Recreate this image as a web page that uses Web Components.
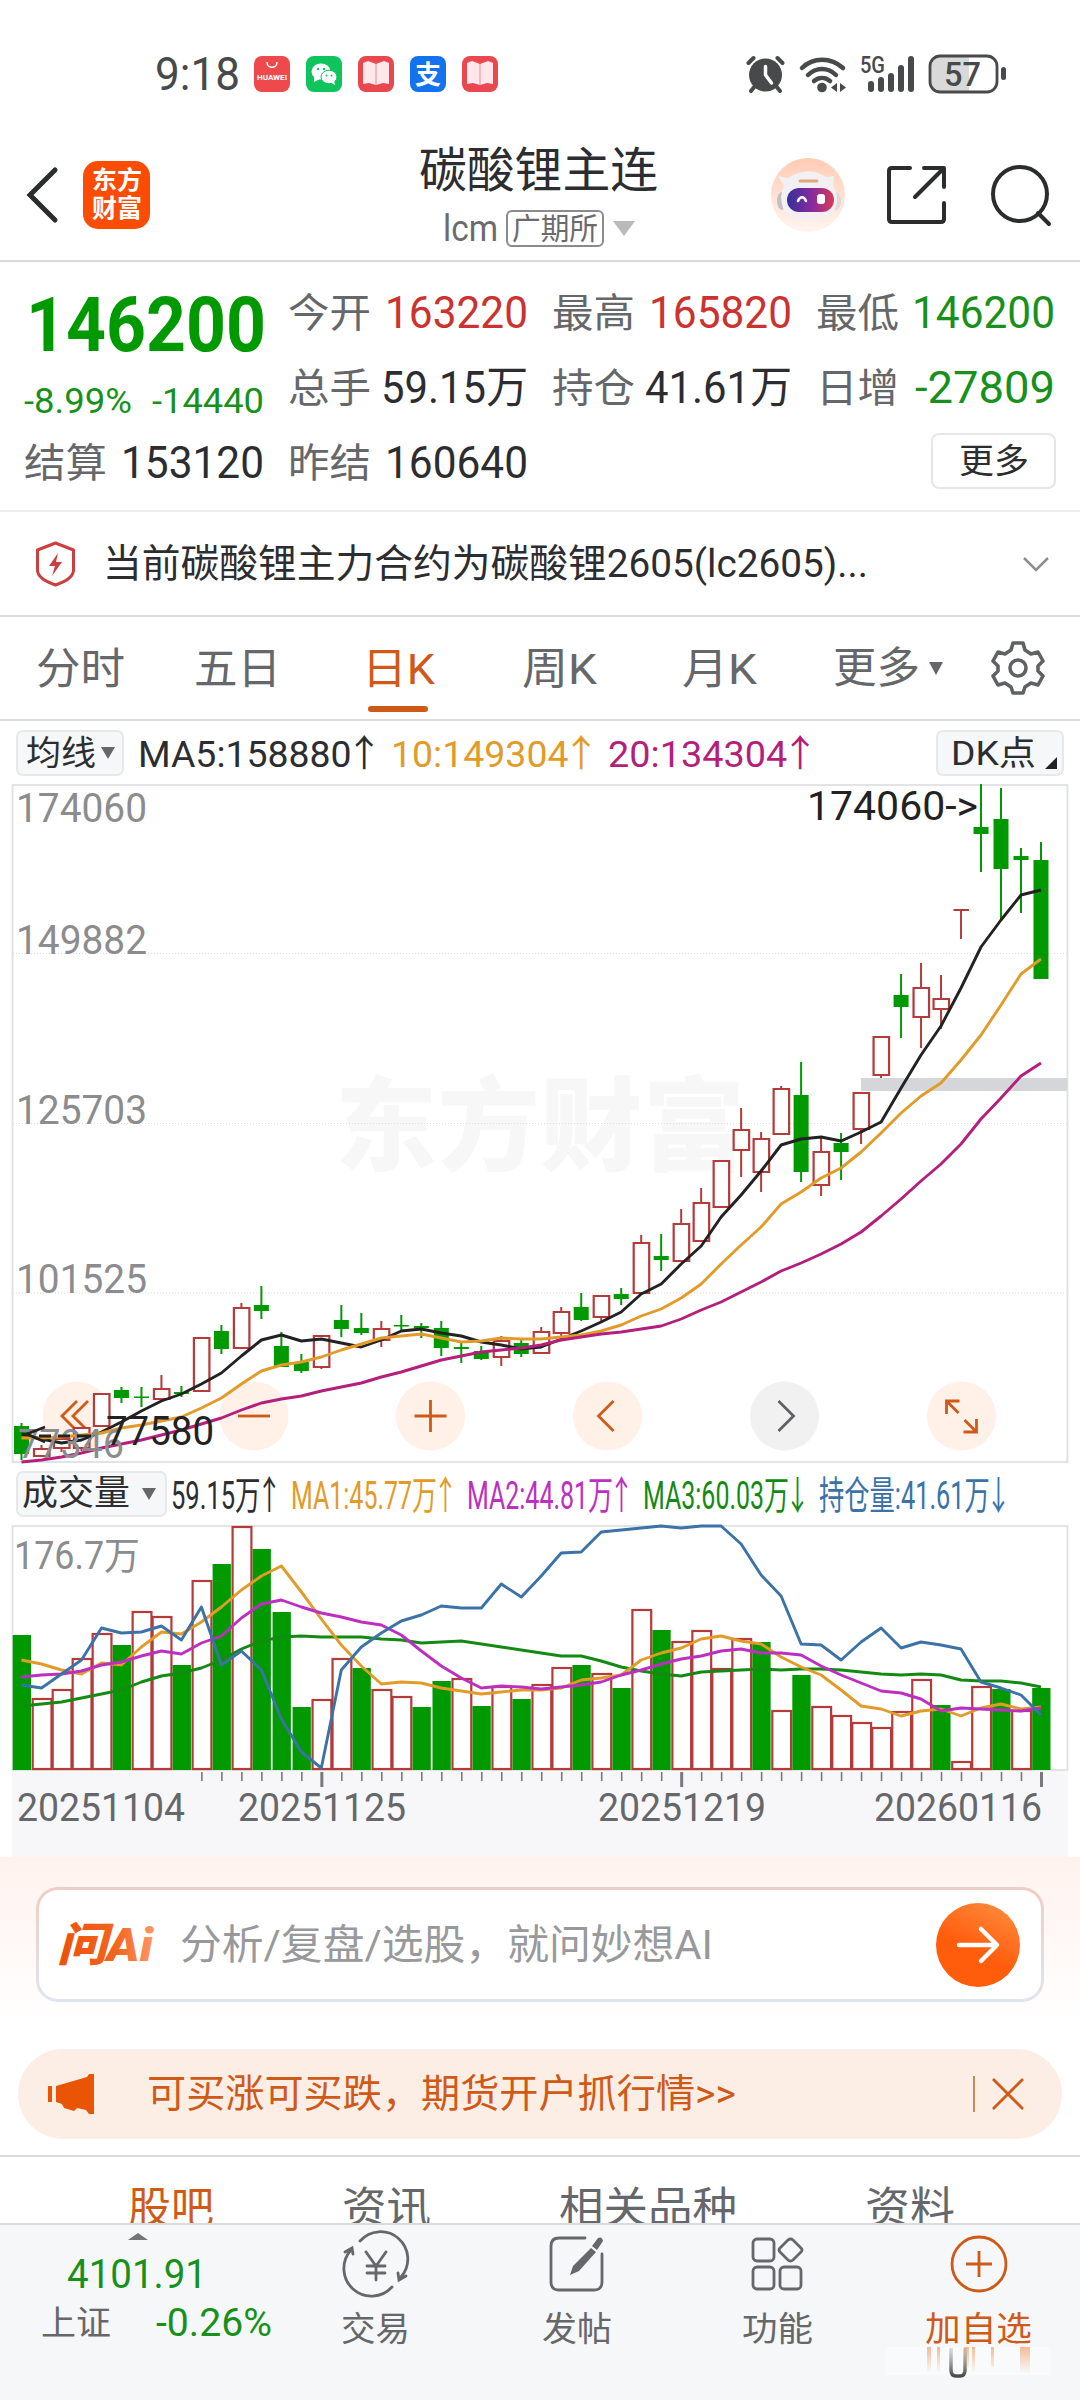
<!DOCTYPE html>
<html lang="zh-CN">
<head>
<meta charset="utf-8">
<title>碳酸锂主连</title>
<style>
  :root {
    --green: #009a00;
    --green-text: #17911b;
    --red: #b53a3a;
    --red-text: #cb3230;
    --orange: #cf5a18;
    --ink: #2c2d30;
    --grey: #65676a;
    --line: #dadbdc;
    --panel: #f6f7f9;
  }

  body {
    margin: 0;
    width: 1080px;
    height: 2400px;
    overflow: hidden;
    background: #fff;
    color: var(--ink);
    font-family: Roboto, "Liberation Sans", "Noto Sans CJK SC", sans-serif;
  }
</style>
</head>
<body>
<quote-app></quote-app>

<script>
/* Every component clones its own template into an open shadow root */
const define = (name, html, setup) => {
  const template = document.createElement("template");
  template.innerHTML = `<style>* { box-sizing: border-box; } svg { overflow: visible; }</style>${html}`;
  customElements.define(name, class extends HTMLElement {
    constructor() {
      super();
      this.attachShadow({ mode: "open" });
      this.shadowRoot.appendChild(template.content.cloneNode(true));
    }
    connectedCallback() {
      if (setup) setup(this, this.shadowRoot);
    }
  });
};

/* One line of text scaled horizontally to fill a given width */
define("fit-text", `
  <style>
    :host { display: inline-block; white-space: nowrap; flex: none; }
    span { display: inline-block; transform-origin: 0 50%; }
    ::slotted(b) { font-family: "Noto Sans CJK SC", sans-serif; font-weight: 400; margin: 0 -.16em; }
  </style>
  <span><slot></slot></span>
`, (host, sr) => {
  const span = sr.querySelector("span");
  const width = Number(host.getAttribute("width"));
  host.style.width = width + "px";
  span.style.transform = "none";
  span.style.transform = `scaleX(${width / span.getBoundingClientRect().width})`;
});

define("status-bar", `
  <style>
    :host { display: flex; align-items: center; height: 147px; padding: 0 74px 0 155px; color: #48494b; }
    .time { font-size: 47px; line-height: 60px; margin-right: 14px; }
    .apps { display: flex; gap: 16px; margin-top: 1px; }
    .right { display: flex; margin-left: auto; align-items: center; }
    svg { display: block; }
  </style>
  <fit-text class="time" width="85">9:18</fit-text>
  <div class="apps">
    <svg width="36" height="36"><rect width="36" height="36" rx="8" fill="#ee4a4c"/><path d="M13 6c0 7 10 7 10 0" fill="none" stroke="#fff" stroke-width="1.5"/><text x="3" y="24" font-size="8" font-weight="700" fill="#fff" textLength="30" lengthAdjust="spacingAndGlyphs">HUAWEI</text></svg>
    <svg width="36" height="36"><rect width="36" height="36" rx="8" fill="#0fc45c"/><ellipse cx="15" cy="15.500" rx="9.500" ry="8" fill="#fff"/><path d="M8 20l0 6 6-3z" fill="#fff"/><ellipse cx="23" cy="21" rx="8" ry="6.800" fill="#fff" stroke="#0fc45c"/><path d="M24 26l5 3-1-5z" fill="#fff"/><g fill="#0fc45c"><circle cx="12" cy="13" r="1.200"/><circle cx="18" cy="13" r="1.200"/><circle cx="20.500" cy="19.500" r="1"/><circle cx="25.500" cy="19.500" r="1"/></g></svg>
    <svg width="36" height="36"><rect width="36" height="36" rx="8" fill="#e9484f"/><path d="M5 7l5-2 8 3 8-3 5 2v21l-6-1-7 2-7-2-6 1z" fill="#ffe7ea"/><path d="M18 8v21" stroke="#f4a9b2" stroke-width="1.500"/></svg>
    <svg width="36" height="36"><rect width="36" height="36" rx="8" fill="#1472ee"/><text x="5" y="28" font-size="26" font-weight="700" fill="#fff">支</text></svg>
    <svg width="36" height="36"><rect width="36" height="36" rx="8" fill="#e9484f"/><path d="M5 7l5-2 8 3 8-3 5 2v21l-6-1-7 2-7-2-6 1z" fill="#ffe7ea"/><path d="M18 8v21" stroke="#f4a9b2" stroke-width="1.500"/></svg>
  </div>
  <svg class="right" width="260" height="40" viewBox="746 53 260 40">
    <g fill="#48494b">
      <circle cx="765.500" cy="74" r="16.500"/>
      <circle cx="822" cy="86.500" r="4.800"/>
      <path d="M837 82l-6 4.500 6 4.500zM840 82v9l6-4.500z"/>
      <rect x="868" y="80" width="6" height="11" rx="3"/><rect x="878" y="76" width="6" height="15" rx="3"/><rect x="888" y="72" width="6" height="19" rx="3"/><rect x="898" y="64" width="6" height="27" rx="3"/><rect x="908" y="55" width="6" height="36" rx="3"/>
      <rect x="1001" y="66" width="5" height="13" rx="2.500"/>
    </g>
    <g fill="none" stroke="#48494b" stroke-linecap="round" stroke-width="4">
      <path d="M748.500 62l5-5M782.500 62l-5-5M755 85l-4 5M776 85l4 5"/>
      <path d="M802 67c11-11 29-11 41 0M808 74c8-8 20-8 28 0M814 80c5-4 11-4 16 0" stroke-width="4.500"/>
      <path d="M765.500 65.500V74l6 8" stroke="#fff" stroke-width="3.500"/>
    </g>
    <path d="M940 56h29v36h-29q-10 0-10-10V66q0-10 10-10z" fill="#d9d9d9"/>
    <rect x="930" y="55" width="67" height="36" rx="10" fill="none" stroke="#48494b" stroke-width="2.800"/>
    <text x="860" y="72" font-size="23" font-weight="500" fill="#48494b" textLength="25" lengthAdjust="spacingAndGlyphs">5G</text>
    <text x="944" y="85" font-size="34" font-weight="500" fill="#48494b" textLength="37" lengthAdjust="spacingAndGlyphs">57</text>
  </svg>
`);

define("title-bar", `
  <style>
    :host { display: grid; grid-template: 96px / 1fr auto 1fr; align-items: center; height: 115px; padding: 0 28px 0 25px; border-bottom: 2px solid var(--line); }
    .left, .actions { display: flex; align-items: center; }
    .left { gap: 25px; }
    .logo { display: grid; place-content: center; width: 67px; height: 68px; border-radius: 15px; background: #fb4c03; color: #fff; font-size: 25px; font-weight: 700; line-height: 28px; }
    .title { display: flex; flex-direction: column; align-items: center; margin: 4px 0 -4px; }
    .name { font-size: 48px; line-height: 59px; }
    .sub { display: flex; align-items: center; height: 58px; color: #6a6b6d; font-size: 37px; gap: 8px; }
    .market { display: flex; align-items: center; height: 37px; padding: 0 4px; border: 2px solid #8a8b8d; border-radius: 6px; font-size: 30px; line-height: 33px; }
    .tri { border: 11px solid transparent; border-top: 15px solid #b9babb; border-bottom: 0; margin-left: 1px; }
    .actions { justify-content: flex-end; gap: 40px; }
    .search { margin-left: 4px; }
    svg { display: block; }
  </style>
  <div class="left">
    <svg width="33" height="56"><path d="M30 3L5 28l25 25" fill="none" stroke="#2b2c2e" stroke-width="5" stroke-linecap="round"/></svg>
    <div class="logo"><fit-text width="50">东方</fit-text><fit-text width="50">财富</fit-text></div>
  </div>
  <div class="title">
    <fit-text class="name" width="239">碳酸锂主连</fit-text>
    <div class="sub"><fit-text width="55">lcm</fit-text><div class="market"><fit-text width="86">广期所</fit-text></div><i class="tri"></i></div>
  </div>
  <div class="actions">
    <svg width="76" height="76">
      <defs>
        <linearGradient id="bg" x2="0" y2="1"><stop stop-color="#ffcbb3"/><stop offset="1" stop-color="#fff6f1"/></linearGradient>
        <linearGradient id="face"><stop stop-color="#34309c"/><stop offset=".55" stop-color="#8a2b9c"/><stop offset="1" stop-color="#d93a55"/></linearGradient>
      </defs>
      <circle cx="38" cy="38" r="37" fill="url(#bg)"/>
      <ellipse cx="12" cy="44" rx="5" ry="9" fill="#c4bfc3"/><ellipse cx="66" cy="44" rx="5" ry="9" fill="#e0d8d9"/>
      <path d="M8 19l10 2q20-13 38-1l8-1-1 10q6 10 3 20-4 13-27 13T13 51q-4-12 1-22z" fill="#f3f0f3"/>
      <rect x="17" y="31" width="47" height="24" rx="12" fill="url(#face)"/>
      <path d="M30 24h17" stroke="#dda77f" stroke-width="3" stroke-linecap="round"/>
      <path d="M28 44c2-5 6-5 8 0" fill="none" stroke="#fff" stroke-width="2.500" stroke-linecap="round"/>
      <rect x="47" y="37" width="8" height="10" rx="3" fill="#fff"/>
    </svg>
    <svg width="60" height="60" fill="none" stroke="#2b2c2e" stroke-width="4" stroke-linecap="round" stroke-linejoin="round"><path d="M24 3H6q-3 0-3 3v48q0 3 3 3h49q3 0 3-3V38M38 3h20v19M57 4L29 32"/></svg>
    <svg class="search" width="62" height="60" fill="none" stroke="#2b2c2e" stroke-width="4" stroke-linecap="round"><circle cx="30" cy="29" r="27"/><path d="M48 48l11 11"/></svg>
  </div>
`);

/* Label on the left, figure pushed to the right */
define("stat-cell", `
  <style>
    :host { display: flex; justify-content: space-between; align-items: center; height: 75px; font-size: 44px; line-height: 75px; }
    .label { font-size: 40px; color: var(--grey); }
  </style>
  <fit-text class="label" width="83"><slot name="label"></slot></fit-text>
  <slot></slot>
`);

define("quote-stats", `
  <style>
    :host { display: grid; grid-template-columns: 240px 240px 240px 239px; grid-auto-rows: 75px; column-gap: 24px; height: 250px; padding: 14px 24px 0 24px; border-bottom: 2px solid #ececec; }
    .price { grid-row: span 2; color: var(--green); display: flex; flex-direction: column; }
    .price > fit-text { font-size: 76px; font-weight: 700; line-height: 99px; align-self: flex-end; margin-right: -2px; }
    .change { display: flex; justify-content: space-between; font-size: 35px; line-height: 54px; color: var(--green-text); }
    .up { color: var(--red-text); }
    .down { color: var(--green-text); }
    .more { grid-column: 4; justify-self: end; align-self: center; display: grid; place-content: center; width: 125px; height: 56px; margin: -5px -1px 0 0; border: 2px solid #e6e6e6; border-radius: 8px; font-size: 34px; line-height: 52px; }
  </style>
  <div class="price">
    <fit-text width="240">146200</fit-text>
    <div class="change"><fit-text width="108">-8.99%</fit-text><fit-text width="112">-14440</fit-text></div>
  </div>
  <stat-cell><span slot="label">今开</span><fit-text class="up" width="143">163220</fit-text></stat-cell>
  <stat-cell><span slot="label">最高</span><fit-text class="up" width="143">165820</fit-text></stat-cell>
  <stat-cell><span slot="label">最低</span><fit-text class="down" width="143">146200</fit-text></stat-cell>
  <stat-cell><span slot="label">总手</span><fit-text width="147">59.15万</fit-text></stat-cell>
  <stat-cell><span slot="label">持仓</span><fit-text width="147">41.61万</fit-text></stat-cell>
  <stat-cell><span slot="label">日增</span><fit-text class="down" width="140">-27809</fit-text></stat-cell>
  <stat-cell><span slot="label">结算</span><fit-text width="143">153120</fit-text></stat-cell>
  <stat-cell><span slot="label">昨结</span><fit-text width="143">160640</fit-text></stat-cell>
  <div class="more"><fit-text width="70">更多</fit-text></div>
`);

define("contract-notice", `
  <style>
    :host { display: flex; align-items: center; height: 105px; padding: 1px 30px 0 35px; border-bottom: 2px solid var(--line); font-size: 39px; line-height: 60px; }
    fit-text { margin-left: 27px; }
    .chev { margin-left: auto; }
  </style>
  <svg width="41" height="46" fill="none" stroke="#cb3f40" stroke-width="3" stroke-linejoin="round"><path d="M20.500 2l18 7v20q0 9-18 15-18-6-18-15V9z"/><path d="M23 12l-9 13h6l-3 10 10-14h-6z" fill="#cb3f40" stroke="none"/></svg>
  <fit-text width="765">当前碳酸锂主力合约为碳酸锂2605(lc2605)...</fit-text>
  <svg class="chev" width="28" height="18"><path d="M2 3l12 12L26 3" fill="none" stroke="#8d8e90" stroke-width="2.500"/></svg>
`);

define("period-tabs", `
  <style>
    :host { display: flex; height: 104px; border-bottom: 2px solid var(--line); color: var(--grey); font-size: 43px; line-height: 104px; }
    div { width: 160px; text-align: center; }
    div:first-of-type { width: 157px; }
    .on { position: relative; color: var(--orange); }
    .on::after { content: ""; position: absolute; left: 51px; bottom: 7px; width: 60px; height: 6px; border-radius: 3px; background: var(--orange); }
    .more { display: flex; align-items: center; justify-content: center; width: 181px; gap: 9px; }
    .more i { border: 7px solid transparent; border-top: 13px solid var(--grey); border-bottom: 0; }
    svg { align-self: center; margin: 0 0 0 13px; }
  </style>
  <div><fit-text width="89">分时</fit-text></div>
  <div><fit-text width="87">五日</fit-text></div>
  <div class="on"><fit-text width="73">日K</fit-text></div>
  <div><fit-text width="75">周K</fit-text></div>
  <div><fit-text width="75">月K</fit-text></div>
  <div class="more"><fit-text width="87">更多</fit-text><i></i></div>
  <svg width="54" height="54" viewBox="0 0 54 54" fill="none" stroke="#5f6164" stroke-width="3.600" stroke-linejoin="round"><path d="M22 2h10l2 7 6 4 7-2 5 9-5 5v5l5 5-5 9-7-2-6 4-2 6H22l-2-6-6-4-7 2-5-9 5-5v-5l-5-5 5-9 7 2 6-4z"/><circle cx="27" cy="27" r="8"/></svg>
`);

define("ma-legend", `
  <style>
    :host { display: flex; align-items: center; height: 63px; padding: 0 16px; font-size: 37px; line-height: 44px; gap: 14px; }
    .pick { position: relative; display: flex; align-items: center; justify-content: center; gap: 5px; width: 108px; height: 46px; border: 2px solid #e7e8ea; border-radius: 7px; background: var(--panel); font-size: 34px; }
    .pick i { border: 7px solid transparent; border-top: 12px solid var(--grey); border-bottom: 0; }
    .dk { width: 128px; margin-left: auto; justify-content: flex-start; padding-left: 13px; }
    .dk i { position: absolute; right: 5px; bottom: 5px; border: 6px solid #222; border-top-color: transparent; border-left-color: transparent; }
  </style>
  <div class="pick"><fit-text width="70">均线</fit-text><i></i></div>
  <fit-text width="239">MA5:158880<b>↑</b></fit-text>
  <fit-text width="203" style="color: #e29b28">10:149304<b>↑</b></fit-text>
  <fit-text width="205" style="color: #b41f7c">20:134304<b>↑</b></fit-text>
  <div class="pick dk"><fit-text width="85">DK点</fit-text><i></i></div>
`);

/* x of the n-th trading day, shared by both charts */
const dayX = (n) => 21.5 + n * 19.99;
const polyline = (values, colour) =>
  `<polyline fill="none" stroke="${colour}" stroke-width="2.900" stroke-linejoin="round" points="${values.map((y, n) => `${dayX(n).toFixed(1)},${y}`).join(" ")}"/>`;

/* high, open/close top, open/close bottom, low; falling days start with g */
const candles = `g639,642,670,676 r661,665,672,673 r653,655,664,668 r643,644,664,667 r609,610,642,643 g603,606,614,619
g603,612.5,614,623 r591,605,615,617 g602,608,610,613 r553,554,607,607 g541,547,565,570 r519,524,564,564 g502,521,527,535
g548,562,583,583 g570,578,587,589 r551,552,583,585 g521,536,545,553 g529,544,549,551 r537,545,556,563 g531,541,542.5,547
g539,542,544,554 g537,544,564,572 g558,563,565,579 g562,567,575,576 r552,557,573,582 g556,559,570,573 r543,548,569,569
r523,528,549,552 g509,523,536,537 r512,512,533,537 g504,510,515,521 r451,459,509,509 g450,472,476,487 r425,440,477,477
r404,419,457,457 r377,377,423,423 r324,346,366,393 r348,355,388,408 r302,305,350,350 g278,311,388,398 r352,368,401,412
g349,359,368,396 r308,309,345,360 r253,253,291,294 g190,211,223,254 r179,204,233,264 r191,215,225,245 r126,126,126,155
g0,43,50,88 g4,35,85,136 g64,72,76,129 g58,76,195,195`.split(/\s+/).map((c) => [c[0], ...c.slice(1).split(",").map(Number)]);

const ma5 = [650,655,659,656,648,638,627,617,610,600,589,572,556,551,557,555,559,563,556,547,545,549,552,558,561,565,563,555,547,538,528,510,500,480,462,433,411,387,361,355,353,357,348,338,304,271,242,204,163,136,111,106];
const ma10 = [654,654,653,651,649,644,641,637,633,624,614,600,587,581,578,573,566,560,554,552,550,554,558,557,554,555,555,553,551,547,541,532,525,514,500,480,461,443,420,408,394,384,368,349,329,312,299,276,251,221,190,175];
const ma20 = [678,676,673,669,664,660,656,651,646,640,634,626,619,615,612,607,603,599,593,588,582,576,572,568,566,564,561,556,553,550,548,545,542,535,526,518,508,498,487,479,470,460,448,432,415,397,380,360,335,314,292,279];

define("price-chart", `
  <style>
    :host { display: block; height: 679px; }
    svg { display: block; }
  </style>
  <svg width="1080" height="679" font-size="40"></svg>
`, (host, sr) => {
  const bars = candles.map(([kind, high, top, bottom, low], n) => {
    const x = dayX(n);
    if (kind === "g") {
      return `<path d="M${x} ${high}V${low}" stroke="#009a00" stroke-width="2"/><rect x="${x - 7.5}" y="${top}" width="15" height="${bottom - top}" fill="#009a00"/>`;
    }
    return `<path d="M${x} ${high}V${top}M${x} ${bottom}V${low}" stroke="#b53a3a" stroke-width="2"/><path d="M${x - 7.5} ${top}h15.500v${bottom - top}h-15.500z" fill="#fff" stroke="#b53a3a" stroke-width="2.200"/>`;
  }).join("");

  const disc = (x, icon, colour = "#cf5a18", fill = "#fff0e8") =>
    `<circle cx="${x}" cy="632" r="34.500" fill="${fill}"/><path transform="translate(${x} 632)" d="${icon}" fill="none" stroke="${colour}" stroke-width="2.800"/>`;

  sr.querySelector("svg").innerHTML = `
    <text x="335" y="379" font-size="102" font-weight="900" fill="#f7f7f7" textLength="410">东方财富</text>
    <path d="M13 169.500H1067M13 339.500H1067M13 509H1067" stroke="#dcdcdc" stroke-dasharray="1 2"/>
    <rect x="12.500" y="1" width="1055" height="677" fill="none" stroke="#dfe0e1" stroke-width="1.800"/>
    <g fill="#8b8c8e">
      <text x="16" y="38" textLength="131" lengthAdjust="spacingAndGlyphs">174060</text>
      <text x="16" y="170" textLength="131" lengthAdjust="spacingAndGlyphs">149882</text>
      <text x="16" y="340" textLength="131" lengthAdjust="spacingAndGlyphs">125703</text>
      <text x="16" y="509" textLength="131" lengthAdjust="spacingAndGlyphs">101525</text>
    </g>
    ${disc(77, "M0-15L-15 0 0 15M11-15L-4 0 11 15")}
    ${disc(254, "M-16 0H16")}
    ${disc(430.5, "M-16 0H16M0-16V16")}
    ${disc(607.5, "M6-15L-9 0 6 15")}
    ${disc(784.5, "M-6-15L9 0-6 15", "#5f6164", "#f1f1f2")}
    ${disc(961.5, "M-15-2V-15H-2M-15-15L-3-3M15 3V16H2M15 16L3 4")}
    <rect x="861" y="294" width="206" height="13" fill="#d4d6da"/>
    ${bars}
    ${polyline(ma5, "#222")}
    ${polyline(ma10, "#e29b28")}
    ${polyline(ma20, "#b41f7c")}
    <text x="18" y="674" textLength="106" lengthAdjust="spacingAndGlyphs" fill="#8b8c8e">77346</text>
    <path d="M45 643L27 650l18 8M39 652h12M58 652h12M77 652h14" fill="none" stroke="#222" stroke-width="2.800"/>
    <text x="106" y="661" textLength="108" lengthAdjust="spacingAndGlyphs" fill="#222">77580</text>
    <text x="807" y="36" textLength="171" lengthAdjust="spacingAndGlyphs" fill="#222">174060-&gt;</text>
  `;
});

define("volume-legend", `
  <style>
    :host { display: flex; align-items: center; height: 62px; padding: 0 0 1px 16px; font-size: 39px; line-height: 44px; gap: 13px; }
    .pick { display: flex; align-items: center; justify-content: space-between; width: 151px; height: 46px; padding: 0 9px 0 4px; border: 2px solid #e7e8ea; border-radius: 7px; background: var(--panel); font-size: 35px; margin-right: -9px; }
    .pick i { border: 7px solid transparent; border-top: 12px solid var(--grey); border-bottom: 0; }
  </style>
  <div class="pick"><fit-text width="108">成交量</fit-text><i></i></div>
  <fit-text width="107">59.15万<b>↑</b></fit-text>
  <fit-text width="163" style="color: #e29b28">MA1:45.77万<b>↑</b></fit-text>
  <fit-text width="163" style="color: #bd2fc0">MA2:44.81万<b>↑</b></fit-text>
  <fit-text width="163" style="color: #148a14">MA3:60.03万<b>↓</b></fit-text>
  <fit-text width="188" style="color: #3b72a8">持仓量:41.61万<b>↓</b></fit-text>
`);

/* top edge of every volume bar */
const volumes = `g110 r173 r164 r133 r108 g120 r86 r91 g140 r55 g39 r1 g24 g87 g182 r174 r133 g143 r164 r171 g182 g156 r153 g181 r161 g174
r159 r142 g140 r148 g163 r84 g105 r116 r105 r143 r113 g117 r185 g150 r181 r190 r197 r202 r186 r154 g180 r236 r161 g164 r185 g163`.split(/\s+/);
const vol1 = [135,139,145,149,138,140,122,107,109,97,82,65,51,41,67,94,120,141,159,157,158,163,166,169,167,165,165,163,155,153,150,135,128,123,114,111,116,119,132,142,150,165,181,184,191,186,184,191,183,179,184,182];
const vol2 = [152,150,149,146,140,137,131,126,129,118,111,93,79,75,82,88,92,97,100,110,126,141,153,163,161,162,164,162,160,157,150,145,139,134,131,126,124,128,128,130,141,150,158,166,168,174,186,183,184,185,186,183];
const vol3 = [181,179,177,173,169,165,157,151,148,143,135,124,116,112,111,112,112,112,114,115,118,117,116,119,122,125,128,131,131,136,142,146,149,151,147,146,145,144,145,144,144,145,147,149,150,149,150,155,156,156,158,162];
const openInterest = [160,163,149,135,103,108,107,101,115,82,140,126,145,194,227,243,145,122,108,96,90,81,83,83,59,72,51,28,27,7,5,3,1,3,1,1,19,50,71,119,120,135,117,103,123,117,120,124,157,163,170,190];

define("volume-chart", `
  <style>
    :host { display: block; height: 332px; }
    svg { display: block; }
  </style>
  <svg width="1080" height="332" font-size="38"></svg>
`, (host, sr) => {
  const bars = volumes.map((v, n) => {
    const top = Number(v.slice(1));
    const x = 12.7 + n * 19.99;
    return v[0] === "g"
      ? `<rect x="${x}" y="${top}" width="18.300" height="${245 - top}" fill="#009a00"/>`
      : `<rect x="${x}" y="${top + 1}" width="18.800" height="${243 - top}" fill="#fff" stroke="#b53a3a" stroke-width="2.200"/>`;
  }).join("");
  // the axis starts its ticks after the first date label
  let ticks = "";
  for (let n = 9; n < 52; n++) {
    const big = n === 15 || n === 33 || n === 51;
    ticks += `<path d="M${dayX(n) + 0.5} 247v${big ? 15 : 9}" stroke="#77797c" stroke-width="${big ? 3 : 1.6}"/>`;
  }
  sr.querySelector("svg").innerHTML = `
    <rect x="12" y="246" width="1056" height="86" fill="#f7f7fa"/>
    <rect x="12.500" y="1" width="1055" height="244" fill="#fff" stroke="#dfe0e1" stroke-width="1.800"/>
    <text x="14" y="44" textLength="126" lengthAdjust="spacingAndGlyphs" fill="#8b8c8e">176.7万</text>
    ${bars}
    ${polyline(vol3, "#148a14")}
    ${polyline(vol1, "#e29b28")}
    ${polyline(vol2, "#bd2fc0")}
    ${polyline(openInterest, "#3b72a8")}
    ${ticks}
    <g fill="#65676a">
      <text x="17" y="296" textLength="168" lengthAdjust="spacingAndGlyphs">20251104</text>
      <text x="238" y="296" textLength="168" lengthAdjust="spacingAndGlyphs">20251125</text>
      <text x="598" y="296" textLength="168" lengthAdjust="spacingAndGlyphs">20251219</text>
      <text x="874" y="296" textLength="168" lengthAdjust="spacingAndGlyphs">20260116</text>
    </g>
  `;
});

define("ask-ai", `
  <style>
    :host { display: block; height: 192px; padding: 30px 36px 0; background: linear-gradient(#fff2ee, #fff 88%); }
    .box { display: flex; align-items: center; height: 115px; padding: 0 21px; border: 3px solid transparent; border-radius: 22px; background: linear-gradient(#fff, #fff) padding-box, linear-gradient(#efcdc4, #dfe5ee) border-box; color: #98999b; font-size: 41px; line-height: 60px; }
    .go { margin-left: auto; }
  </style>
  <div class="box">
    <svg width="98" height="50">
      <defs><linearGradient id="ai"><stop stop-color="#ee5008"/><stop offset=".6" stop-color="#f2651f"/><stop offset="1" stop-color="#ff9866"/></linearGradient></defs>
      <text x="-3" y="41" font-size="46" font-weight="900" font-style="italic" fill="url(#ai)" textLength="96" lengthAdjust="spacingAndGlyphs">问Ai</text>
    </svg>
    <fit-text width="533" style="margin-left: 22px">分析/复盘/选股，就问妙想AI</fit-text>
    <svg class="go" width="84" height="84">
      <defs><linearGradient id="go" x1=".8" x2=".3" y2="1"><stop stop-color="#ff8a3c"/><stop offset=".6" stop-color="#ff5d0c"/></linearGradient></defs>
      <circle cx="42" cy="42" r="42" fill="url(#go)"/>
      <path d="M23 42h37M45 26l16 16-16 16" fill="none" stroke="#fff" stroke-width="4.500" stroke-linecap="round" stroke-linejoin="round"/>
    </svg>
  </div>
`);

define("promo-banner", `
  <style>
    :host { display: flex; align-items: center; height: 90px; margin: 0 18px; padding: 0 36px 0 29px; border-radius: 45px; background: #fceee5; color: var(--orange); font-size: 39px; line-height: 60px; }
    .text { margin-left: 53px; }
    .bar { width: 2px; height: 36px; margin-left: auto; background: #c98a63; }
    .close { margin-left: 15px; }
  </style>
  <svg width="47" height="40" fill="#e95504"><path d="M1 12h4v16H1zM9 12L40 3l2-3h5v40h-5l-3-4-9-2-3 3-10-3-2-4-6-2z"/></svg>
  <fit-text class="text" width="589">可买涨可买跌，期货开户抓行情&gt;&gt;</fit-text>
  <i class="bar"></i>
  <svg class="close" width="36" height="36"><path d="M3 3l30 30M33 3L3 33" stroke="#cf5a18" stroke-width="2.800"/></svg>
`);

define("info-tabs", `
  <style>
    :host { display: flex; gap: 128px; height: 68px; margin-top: 16px; padding-left: 128px; border-top: 2px solid var(--line); overflow: hidden; color: var(--grey); font-size: 43px; line-height: 103px; }
    .on { color: var(--orange); }
  </style>
  <fit-text class="on" width="86">股吧</fit-text>
  <fit-text width="89">资讯</fit-text>
  <fit-text width="178">相关品种</fit-text>
  <fit-text width="90">资料</fit-text>
`);

define("nav-item", `
  <style>
    :host { display: flex; flex-direction: column; align-items: center; width: 201px; padding-top: 9px; color: var(--grey); font-size: 34px; line-height: 40px; gap: 15px; }
    ::slotted(svg) { display: block; }
  </style>
  <slot name="icon"></slot>
  <slot></slot>
`);

define("bottom-nav", `
  <style>
    :host { position: relative; display: flex; height: 177px; border-top: 2px solid var(--line); background: var(--panel); }
    .index { display: flex; flex-direction: column; width: 275px; padding-top: 8px; color: var(--green-text); }
    .index i { align-self: flex-start; margin-left: 128px; border: 10px solid transparent; border-bottom: 7px solid #747577; border-top: 0; }
    .value { margin: 9px 0 0 67px; font-size: 41px; line-height: 50px; }
    .row { display: flex; margin-left: 41px; font-size: 38px; line-height: 48px; }
    .row span { color: var(--grey); font-size: 34px; margin-right: 45px; }
    .smudge { position: absolute; left: 880px; top: 120px; opacity: .75; }
  </style>
  <div class="index">
    <i></i>
    <fit-text class="value" width="140">4101.91</fit-text>
    <div class="row"><span><fit-text width="70">上证</fit-text></span><fit-text width="116">-0.26%</fit-text></div>
  </div>
  <nav-item>
    <svg slot="icon" width="66" height="60" fill="none" stroke="#65676a" stroke-width="2.800" stroke-linecap="round"><path d="M17 7A27 27 0 0 1 58 43M49 53A27 27 0 0 1 8 16M2 18l7-4 1 6M63 42l-7 4-1-7M23 18l10 14 10-14M33 32v14M24 32h18M24 39h18"/></svg>
    <fit-text width="69">交易</fit-text>
  </nav-item>
  <nav-item>
    <svg slot="icon" width="56" height="60" fill="none" stroke="#65676a" stroke-width="2.800" stroke-linecap="round"><path d="M36 4H10Q2 4 2 12v36q0 8 8 8h35q8 0 8-8V20"/><path d="M49 4q4-2 5 3l-6 9-5-4zM42 14l5 4-17 19-9 4 3-9z" fill="#65676a" stroke="none"/></svg>
    <fit-text width="70">发帖</fit-text>
  </nav-item>
  <nav-item>
    <svg slot="icon" width="56" height="60" fill="none" stroke="#65676a" stroke-width="2.800"><rect x="3" y="5" width="21" height="22" rx="4"/><rect x="3" y="33" width="21" height="22" rx="4"/><rect x="30" y="33" width="21" height="22" rx="4"/><path d="M38 6q2.500-2 5 0l8 8q2 2 0 4l-8 8q-2.500 2-5 0l-8-8q-2-2 0-4z"/></svg>
    <fit-text width="71">功能</fit-text>
  </nav-item>
  <nav-item style="color: var(--orange)">
    <svg slot="icon" width="58" height="60" fill="none" stroke="#cf5a18" stroke-width="2.800"><circle cx="29" cy="30" r="27"/><path d="M16 30h26M29 17v26"/></svg>
    <fit-text width="107">加自选</fit-text>
  </nav-item>
  <svg class="smudge" width="176" height="36">
    <defs>
      <linearGradient id="fade" x2="0" y2="1"><stop stop-color="#f2a878"/><stop offset="1" stop-color="#f2a878" stop-opacity="0"/></linearGradient>
      <linearGradient id="dark" gradientUnits="userSpaceOnUse" x1="0" x2="0" y1="0" y2="31"><stop stop-color="#777" stop-opacity=".2"/><stop offset="1" stop-color="#111"/></linearGradient>
    </defs>
    <path d="M6 2h164v28H6z" fill="#fafbfc"/>
    <path d="M47 2h4v24h-4zM57 2h3v24h-3zM84 2h5v20h-5zM92 2h3v24h-3zM111 2h3v20h-3zM140 2h10v26h-10z" fill="url(#fade)"/>
    <path d="M71 3v22q0 6 5 6h4q5 0 5-6V3" fill="none" stroke="url(#dark)" stroke-width="3.500"/>
  </svg>
`);

define("quote-app", `
  <style>:host { display: block; }</style>
  <status-bar></status-bar>
  <title-bar></title-bar>
  <quote-stats></quote-stats>
  <contract-notice></contract-notice>
  <period-tabs></period-tabs>
  <ma-legend></ma-legend>
  <price-chart></price-chart>
  <volume-legend></volume-legend>
  <volume-chart></volume-chart>
  <ask-ai></ask-ai>
  <promo-banner></promo-banner>
  <info-tabs></info-tabs>
  <bottom-nav></bottom-nav>
`);
</script>
</body>
</html>
